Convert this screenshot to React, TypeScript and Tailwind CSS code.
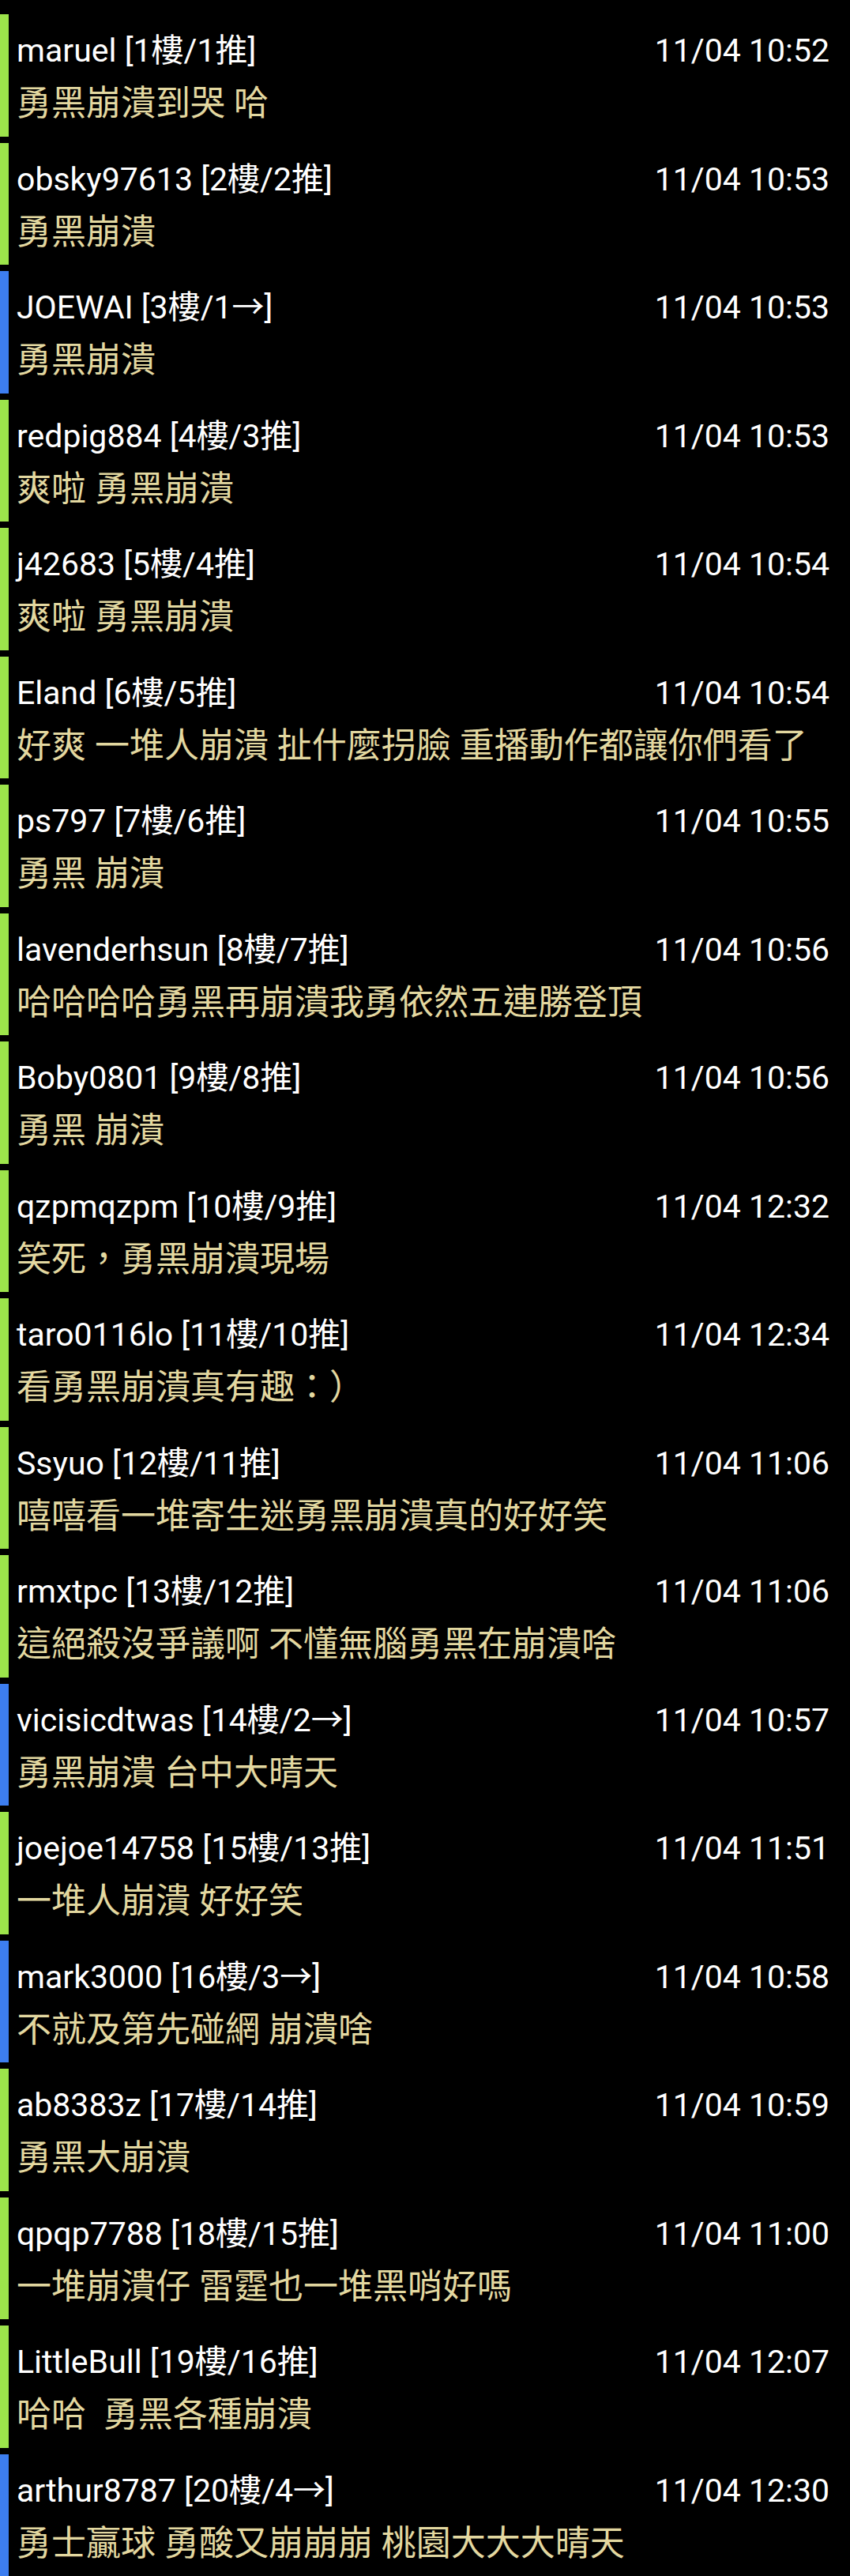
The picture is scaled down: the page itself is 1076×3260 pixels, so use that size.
type Post = {
  user: string;
  floor: number;
  count: number;
  push: boolean;
  time: string;
  text: string;
};

const posts: Post[] = [
  { user: 'maruel', floor: 1, count: 1, push: true, time: '11/04 10:52', text: '勇黑崩潰到哭 哈' },
  { user: 'obsky97613', floor: 2, count: 2, push: true, time: '11/04 10:53', text: '勇黑崩潰' },
  { user: 'JOEWAI', floor: 3, count: 1, push: false, time: '11/04 10:53', text: '勇黑崩潰' },
  { user: 'redpig884', floor: 4, count: 3, push: true, time: '11/04 10:53', text: '爽啦 勇黑崩潰' },
  { user: 'j42683', floor: 5, count: 4, push: true, time: '11/04 10:54', text: '爽啦 勇黑崩潰' },
  { user: 'Eland', floor: 6, count: 5, push: true, time: '11/04 10:54', text: '好爽 一堆人崩潰 扯什麼拐臉 重播動作都讓你們看了' },
  { user: 'ps797', floor: 7, count: 6, push: true, time: '11/04 10:55', text: '勇黑 崩潰' },
  { user: 'lavenderhsun', floor: 8, count: 7, push: true, time: '11/04 10:56', text: '哈哈哈哈勇黑再崩潰我勇依然五連勝登頂' },
  { user: 'Boby0801', floor: 9, count: 8, push: true, time: '11/04 10:56', text: '勇黑 崩潰' },
  { user: 'qzpmqzpm', floor: 10, count: 9, push: true, time: '11/04 12:32', text: '笑死，勇黑崩潰現場' },
  { user: 'taro0116lo', floor: 11, count: 10, push: true, time: '11/04 12:34', text: '看勇黑崩潰真有趣：）' },
  { user: 'Ssyuo', floor: 12, count: 11, push: true, time: '11/04 11:06', text: '嘻嘻看一堆寄生迷勇黑崩潰真的好好笑' },
  { user: 'rmxtpc', floor: 13, count: 12, push: true, time: '11/04 11:06', text: '這絕殺沒爭議啊 不懂無腦勇黑在崩潰啥' },
  { user: 'vicisicdtwas', floor: 14, count: 2, push: false, time: '11/04 10:57', text: '勇黑崩潰 台中大晴天' },
  { user: 'joejoe14758', floor: 15, count: 13, push: true, time: '11/04 11:51', text: '一堆人崩潰 好好笑' },
  { user: 'mark3000', floor: 16, count: 3, push: false, time: '11/04 10:58', text: '不就及第先碰網 崩潰啥' },
  { user: 'ab8383z', floor: 17, count: 14, push: true, time: '11/04 10:59', text: '勇黑大崩潰' },
  { user: 'qpqp7788', floor: 18, count: 15, push: true, time: '11/04 11:00', text: '一堆崩潰仔 雷霆也一堆黑哨好嗎' },
  { user: 'LittleBull', floor: 19, count: 16, push: true, time: '11/04 12:07', text: '哈哈  勇黑各種崩潰' },
  { user: 'arthur8787', floor: 20, count: 4, push: false, time: '11/04 12:30', text: '勇士贏球 勇酸又崩崩崩 桃園大大大晴天' },
];

const font = "font-['Roboto','Noto_Sans_CJK_TC',sans-serif]";

const Row = ({ post }: { post: Post }) => (
  <div
    className={`flex h-[154.5px] flex-col border-l-[11px] pl-[10px] pr-[26px] pt-[18px] ${
      post.push ? 'border-[#9de44b]' : 'border-[#3d7ef0]'
    }`}
  >
    <div className="flex items-center justify-between text-[41px] leading-[56px] text-white">
      <span className="whitespace-pre">
        {post.user} [{post.floor}樓/{post.count}
        {post.push ? '推' : '→'}]
      </span>
      <span>{post.time}</span>
    </div>
    <p className="mt-[9px] whitespace-pre text-[44px] leading-[60px] text-[#e3d8a0]">{post.text}</p>
  </div>
);

export default function App() {
  return (
    <div className={`min-h-[3260px] w-[1076px] overflow-hidden bg-black pt-[18px] ${font}`}>
      <div className="flex flex-col gap-[8px]">
        {posts.map((p) => (
          <Row key={p.floor} post={p} />
        ))}
      </div>
    </div>
  );
}
